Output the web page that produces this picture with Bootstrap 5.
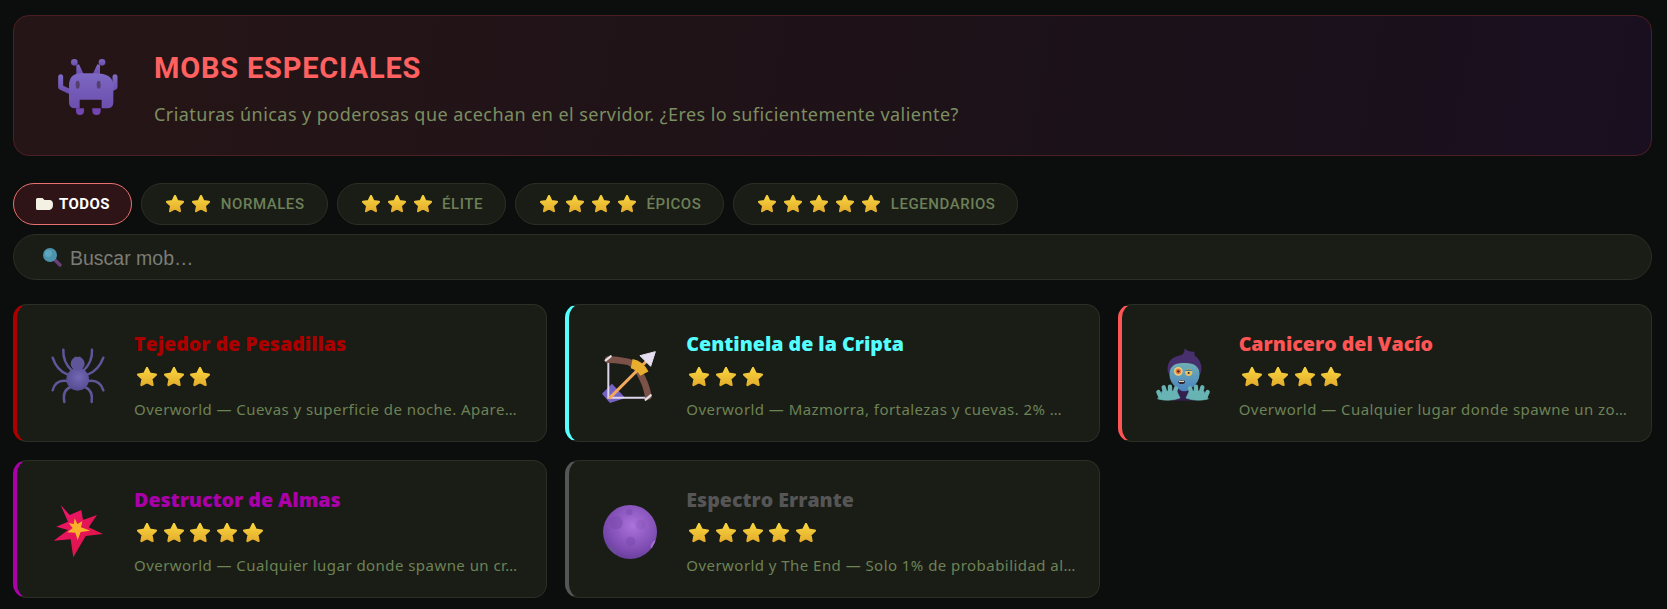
<!DOCTYPE html>
<html lang="es">
<head>
<meta charset="utf-8">
<title>Mobs especiales</title>
<link href="https://cdn.jsdelivr.net/npm/bootstrap@5.3.0/dist/css/bootstrap.min.css" rel="stylesheet">
<style>
html,body{height:100%}
body{background:#0c0e0d;font-family:"Noto Sans",sans-serif;color:#7b8f60;overflow:hidden}
.page-wrap{padding:15px 15px 0 13px}
.hero{height:141px;border:1px solid #4b1f24;border-radius:16px;background:linear-gradient(100deg,#261516 0%,#1b1119 70%,#190f20 100%);padding-left:16px;gap:24px}
.hero-text{padding-top:6px}
.hero-title{font-family:Roboto,sans-serif;font-weight:700;font-size:29px;letter-spacing:.8px;color:#ff6060;line-height:36px;margin:0 0 14.5px}
.hero-sub{font-size:18px;letter-spacing:.44px;color:#7b8f60;line-height:26px;margin:0}
.filters{gap:9px;margin-top:27px}
.fpill{height:42px;border:1px solid #2c2f26;border-radius:21px;background:#1a1c16;padding:0 22px 0 24px;color:#6d8057;font-family:Roboto,sans-serif;font-weight:500;font-size:15px;letter-spacing:.55px;text-transform:uppercase;gap:10.5px}
.fpill.on{background:#2e1416;border-color:#e87070;color:#fff;font-weight:700;padding:0 21.5px;gap:6.6px;letter-spacing:.4px}
.fstars{gap:8px}
.searchbox{height:46px;margin-top:9px;border:1px solid #2c2f26;border-radius:23px;background:#1a1c16;padding:0 28px;gap:8px}
.searchbox input{flex:1;background:transparent;border:0;outline:0;font-family:"Liberation Sans",sans-serif;font-size:19.5px;color:#ddd;padding:3px 0 0;min-width:0}
.searchbox input::placeholder{color:#7a7d75;opacity:1}
.mob-grid{display:grid;grid-template-columns:repeat(3,1fr);gap:18px;margin-top:24px}
.mob-item{height:138px;border:1px solid #2c2f26;border-left:4px solid var(--mc);border-radius:14px;background:#1a1c16;padding-left:13px;gap:14px}
.mob-body{padding-top:4px}
.mob-name{font-family:"Open Sans",sans-serif;font-weight:800;font-size:19.6px;line-height:26px;color:var(--mc);margin:0}
.mob-stars{gap:6.6px;margin:10.5px 0 10.5px 3px}
.mob-loc{font-size:15px;letter-spacing:.45px;line-height:22px;color:#6d8255;white-space:nowrap;margin:0}
</style>
</head>
<body>
<svg width="0" height="0" class="position-absolute">
  <defs>
    <linearGradient id="gs" x1="0" y1="0" x2="0" y2="1"><stop offset="0" stop-color="#f8d43f"/><stop offset="1" stop-color="#e4ae2c"/></linearGradient>
    <linearGradient id="gi" x1="0" y1="0" x2="0" y2="1"><stop offset="0" stop-color="#7d68c2"/><stop offset="1" stop-color="#6c4eae"/></linearGradient>
    <linearGradient id="ge" x1="0" y1="0" x2="1" y2="1"><stop offset="0" stop-color="#f01670"/><stop offset="1" stop-color="#d9143f"/></linearGradient>
    <radialGradient id="gsp" cx=".55" cy=".4" r=".7"><stop offset="0" stop-color="#7369b4"/><stop offset="1" stop-color="#51478d"/></radialGradient>
    <radialGradient id="gm" cx=".55" cy=".38" r=".7"><stop offset="0" stop-color="#ab74dc"/><stop offset=".7" stop-color="#7d4bb0"/><stop offset="1" stop-color="#5f3a92"/></radialGradient>
    <linearGradient id="gz" x1="0" y1="0" x2="0" y2="1"><stop offset="0" stop-color="#6fb0b4"/><stop offset="1" stop-color="#4a83c0"/></linearGradient>
    <clipPath id="mc"><circle cx="144" cy="114" r="81"/></clipPath>
    <symbol id="star" viewBox="2 2 20 20"><path d="M12 3.200l2.700 5.600 6.100.8-4.500 4.200 1.200 6.100-5.500-3-5.500 3 1.200-6.100-4.500-4.200 6.100-.8z" fill="url(#gs)" stroke="url(#gs)" stroke-width="2.400" stroke-linejoin="round"/></symbol>
  </defs>
</svg>
<main class="page-wrap">
  <section class="hero d-flex align-items-center">
    <svg width="100" height="90" viewBox="0 6 300 270" class="flex-shrink-0" aria-hidden="true">
      <g fill="url(#gi)">
        <circle cx="133" cy="70" r="10"/><circle cx="216" cy="70" r="10"/>
        <path d="M139 78l8-2 14 30h-22zM210 78l-8-2-14 30h22z"/>
        <path d="M92 113v32l30 14M255 113v32l-30 14" fill="none" stroke="url(#gi)" stroke-width="15" stroke-linecap="round" stroke-linejoin="round"/>
        <path d="M117 140q0-37 37-37h41q55 0 55 37v50q0 18-18 18h-17v-26h-66v26h-14q-18 0-18-18z"/>
        <path d="M138 208h24v8q0 12-12 12t-12-12zM187 208h25v8q0 12-12.500 12t-12.500-12z" fill="#7246b0"/>
      </g>
      <ellipse cx="143" cy="137" rx="6" ry="12" fill="#54406f"/><ellipse cx="206" cy="137" rx="6" ry="12" fill="#54406f"/>
    </svg>
    <div class="hero-text">
      <h1 class="hero-title text-uppercase">Mobs especiales</h1>
      <p class="hero-sub">Criaturas únicas y poderosas que acechan en el servidor. ¿Eres lo suficientemente valiente?</p>
    </div>
  </section>

  <div class="filters d-flex">
    <button type="button" class="fpill on d-flex align-items-center">
      <svg width="17" height="12" viewBox="0 0 17 12" aria-hidden="true"><path d="M1.500 0h5l2 2h5q3.500 0 3.500 4.500T13.500 12h-12Q0 12 0 10.500v-9Q0 0 1.500 0z" fill="#f3f1e4"/></svg>
      <span>Todos</span>
    </button>
    <button type="button" class="fpill d-flex align-items-center">
      <span class="fstars d-flex"><svg width="18" height="18"><use href="#star"/></svg><svg width="18" height="18"><use href="#star"/></svg></span>
      <span>Normales</span>
    </button>
    <button type="button" class="fpill d-flex align-items-center">
      <span class="fstars d-flex"><svg width="18" height="18"><use href="#star"/></svg><svg width="18" height="18"><use href="#star"/></svg><svg width="18" height="18"><use href="#star"/></svg></span>
      <span>Élite</span>
    </button>
    <button type="button" class="fpill d-flex align-items-center">
      <span class="fstars d-flex"><svg width="18" height="18"><use href="#star"/></svg><svg width="18" height="18"><use href="#star"/></svg><svg width="18" height="18"><use href="#star"/></svg><svg width="18" height="18"><use href="#star"/></svg></span>
      <span>Épicos</span>
    </button>
    <button type="button" class="fpill d-flex align-items-center">
      <span class="fstars d-flex"><svg width="18" height="18"><use href="#star"/></svg><svg width="18" height="18"><use href="#star"/></svg><svg width="18" height="18"><use href="#star"/></svg><svg width="18" height="18"><use href="#star"/></svg><svg width="18" height="18"><use href="#star"/></svg></span>
      <span>Legendarios</span>
    </button>
  </div>

  <div class="searchbox d-flex align-items-center">
    <svg width="20" height="20" viewBox="0 0 20 20" aria-hidden="true">
      <path d="M12 12l6 6" stroke="#6a3f78" stroke-width="3.400" stroke-linecap="round"/>
      <circle cx="8" cy="8" r="7" fill="#4d93ad"/><circle cx="6.500" cy="6.500" r="3.500" fill="#5ea6bd"/>
    </svg>
    <input type="text" placeholder="Buscar mob…" aria-label="Buscar mob">
  </div>

  <div class="mob-grid">
    <article class="mob-item d-flex align-items-center" style="--mc:#aa0000">
      <svg width="90" height="70" viewBox="0 -7 270 210" class="flex-shrink-0" aria-hidden="true">
        <g fill="none" stroke="#5f5699" stroke-width="7.500" stroke-linecap="round">
          <path d="M125 90Q98 65 100 28M161 90Q188 65 186 28M112 102Q80 90 68 52M174 102Q206 90 220 52M112 122Q76 116 68 150M174 122Q210 116 220 150M122 140Q96 150 103 185M165 140Q190 150 185 185"/>
        </g>
        <circle cx="143" cy="117" r="34" fill="url(#gsp)"/>
        <circle cx="143" cy="70" r="21" fill="#5f5699"/>
        <path d="M131 62l4-15 6 8h3l6-8 5 15z" fill="#5f5699"/>
      </svg>
      <div class="mob-body">
        <h2 class="mob-name">Tejedor de Pesadillas</h2>
        <div class="mob-stars d-flex"><svg width="20" height="20"><use href="#star"/></svg><svg width="20" height="20"><use href="#star"/></svg><svg width="20" height="20"><use href="#star"/></svg></div>
        <p class="mob-loc">Overworld — Cuevas y superficie de noche. Apare…</p>
      </div>
    </article>

    <article class="mob-item d-flex align-items-center" style="--mc:#55ffff">
      <svg width="90" height="70" viewBox="-24 -7 270 210" class="flex-shrink-0" aria-hidden="true">
        <path d="M66 130L36 160l24 28 46-15z" fill="#7662c4"/>
        <path d="M55 55V172H175" fill="none" stroke="#ddd6ea" stroke-width="6"/>
        <path d="M55 58Q75 58 100 62Q135 64 150 100Q168 130 175 168" fill="none" stroke="#7a5248" stroke-width="20" stroke-linecap="round"/>
        <path d="M47 60l15-12M167 178l15-13" stroke="#e6dfe6" stroke-width="7" stroke-linecap="round"/>
        <path d="M60 172L170 62" stroke="#f0a95c" stroke-width="9" stroke-linecap="round"/>
        <path d="M125 70Q150 75 163 100" fill="none" stroke="#e9ae2e" stroke-width="28"/>
        <path d="M196 34l-46 12 32 32z" fill="#e5dff0" stroke="#e5dff0" stroke-width="3" stroke-linejoin="round"/>
      </svg>
      <div class="mob-body">
        <h2 class="mob-name">Centinela de la Cripta</h2>
        <div class="mob-stars d-flex"><svg width="20" height="20"><use href="#star"/></svg><svg width="20" height="20"><use href="#star"/></svg><svg width="20" height="20"><use href="#star"/></svg></div>
        <p class="mob-loc">Overworld — Mazmorra, fortalezas y cuevas. 2% …</p>
      </div>
    </article>

    <article class="mob-item d-flex align-items-center" style="--mc:#ff5555">
      <svg width="90" height="70" viewBox="-33 -7 270 210" class="flex-shrink-0" aria-hidden="true">
        <path d="M80 145h65v36H80z" fill="#34204f"/>
        <path d="M66 100Q58 55 98 46Q116 46 116 24Q126 36 146 34Q142 44 154 52Q172 72 164 100L150 78Q115 62 80 78z" fill="#48306f"/>
        <path d="M70 100Q72 66 115 68Q158 66 161 100Q160 128 135 144Q115 162 95 144Q70 128 70 100z" fill="url(#gz)"/>
        <circle cx="97" cy="93" r="13" fill="#f2cf78"/><circle cx="97" cy="93" r="8.500" fill="#e8763a"/><circle cx="97" cy="93" r="3.500" fill="#30262e"/>
        <circle cx="128" cy="96" r="11" fill="#e8c060"/><path d="M115 92q13-10 26 0z" fill="#427f9c"/><circle cx="128" cy="98" r="3" fill="#30262e"/>
        <ellipse cx="107" cy="125" rx="10" ry="6" fill="#2d2a3c"/><path d="M99 121h15v4H99z" fill="#e8d0a8"/>
        <g fill="#68b3b3" stroke="#68b3b3" stroke-linecap="round">
          <path d="M50 152h42l10 21q-32 12-66 3z" stroke-width="2"/>
          <path d="M44 170L37 155M58 158l-5-17M72 156V139M86 158l4-14" fill="none" stroke-width="13"/>
          <path d="M172 152h-42l-10 21q32 12 66 3z" stroke-width="2"/>
          <path d="M178 170l7-15M164 158l5-17M150 156V139M136 158l-4-14" fill="none" stroke-width="13"/>
        </g>
      </svg>
      <div class="mob-body">
        <h2 class="mob-name">Carnicero del Vacío</h2>
        <div class="mob-stars d-flex"><svg width="20" height="20"><use href="#star"/></svg><svg width="20" height="20"><use href="#star"/></svg><svg width="20" height="20"><use href="#star"/></svg><svg width="20" height="20"><use href="#star"/></svg></div>
        <p class="mob-loc">Overworld — Cualquier lugar donde spawne un zo…</p>
      </div>
    </article>

    <article class="mob-item d-flex align-items-center" style="--mc:#aa00aa">
      <svg width="90" height="70" viewBox="0 0 270 210" class="flex-shrink-0" aria-hidden="true">
        <path d="M92 33L119 63 154 48 159 78 201 63 176 100 219 120 167 126 130 190 122 136 71 140 114 108 79 98 114 83z" fill="url(#ge)"/>
        <path d="M134 73l8 17 15-8-4 18 28 10-29 4-9 24-7-22-24-1 16-13-12-15 15 3z" fill="#fbb02b"/>
      </svg>
      <div class="mob-body">
        <h2 class="mob-name">Destructor de Almas</h2>
        <div class="mob-stars d-flex"><svg width="20" height="20"><use href="#star"/></svg><svg width="20" height="20"><use href="#star"/></svg><svg width="20" height="20"><use href="#star"/></svg><svg width="20" height="20"><use href="#star"/></svg><svg width="20" height="20"><use href="#star"/></svg></div>
        <p class="mob-loc">Overworld — Cualquier lugar donde spawne un cr…</p>
      </div>
    </article>

    <article class="mob-item d-flex align-items-center" style="--mc:#555555">
      <svg width="90" height="70" viewBox="0 0 270 210" class="flex-shrink-0" aria-hidden="true">
        <circle cx="144" cy="114" r="81" fill="url(#gm)"/>
        <g clip-path="url(#mc)">
          <g fill="#7a4cad" opacity=".55">
            <circle cx="102" cy="86" r="20"/><circle cx="142" cy="54" r="10"/><circle cx="176" cy="92" r="15" opacity=".5"/><circle cx="146" cy="142" r="14"/><circle cx="88" cy="172" r="16" fill="#6b5596"/>
          </g>
          <circle cx="226" cy="158" r="20" fill="#a06fd0"/>
        </g>
      </svg>
      <div class="mob-body">
        <h2 class="mob-name">Espectro Errante</h2>
        <div class="mob-stars d-flex"><svg width="20" height="20"><use href="#star"/></svg><svg width="20" height="20"><use href="#star"/></svg><svg width="20" height="20"><use href="#star"/></svg><svg width="20" height="20"><use href="#star"/></svg><svg width="20" height="20"><use href="#star"/></svg></div>
        <p class="mob-loc">Overworld y The End — Solo 1% de probabilidad al…</p>
      </div>
    </article>
  </div>
</main>
</body>
</html>
